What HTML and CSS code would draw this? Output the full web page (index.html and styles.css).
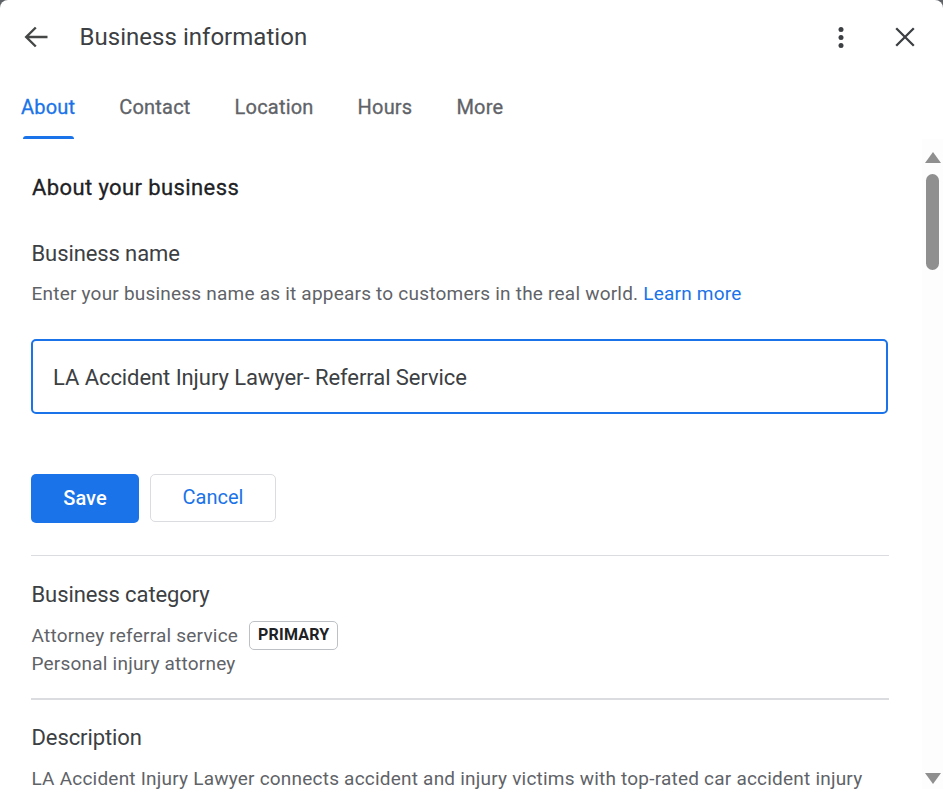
FILE: index.html
```html
<!DOCTYPE html>
<html lang="en">
<head>
<meta charset="utf-8">
<title>Business information</title>
<link rel="stylesheet" href="styles.css">
</head>
<body>
<div class="dialog">
  <header class="topbar">
    <svg class="back" viewBox="0 0 26 24" width="26" height="24"><path d="M24.5 12H3.5M12.8 2.5L3.2 12l9.6 9.5" fill="none" stroke="#444746" stroke-width="2.4"/></svg>
    <h1 class="title">Business information</h1>
    <svg class="dots" viewBox="0 0 8 24" width="8" height="24"><circle cx="4" cy="4.5" r="2.5"/><circle cx="4" cy="12.5" r="2.5"/><circle cx="4" cy="20.5" r="2.5"/></svg>
    <svg class="close" viewBox="0 0 20 20" width="20" height="20"><path d="M1.2 1.2l17.6 17.6M18.8 1.2L1.2 18.8" fill="none" stroke="#3c4043" stroke-width="2.3"/></svg>
  </header>
  <nav class="tabs">
    <a class="tab active">About</a>
    <a class="tab">Contact</a>
    <a class="tab">Location</a>
    <a class="tab">Hours</a>
    <a class="tab">More</a>
  </nav>
  <div class="body">
    <main class="content">
      <h2 class="heading">About your business</h2>
      <h3 class="label first">Business name</h3>
      <p class="help">Enter your business name as it appears to customers in the real world. <a class="link">Learn more</a></p>
      <div class="field">LA Accident Injury Lawyer- Referral Service</div>
      <div class="actions">
        <button class="btn save">Save</button>
        <button class="btn cancel">Cancel</button>
      </div>
      <hr class="rule">
      <h3 class="label">Business category</h3>
      <div class="cat-row"><span class="help-line">Attorney referral service</span><span class="chip">PRIMARY</span></div>
      <div class="help-line second">Personal injury attorney</div>
      <hr class="rule two">
      <h3 class="label">Description</h3>
      <p class="help desc">LA Accident Injury Lawyer connects accident and injury victims with top-rated car accident injury</p>
    </main>
    <aside class="scrollbar">
      <span class="arrow up"></span>
      <span class="thumb"></span>
      <span class="arrow down"></span>
    </aside>
  </div>
</div>
</body>
</html>
```

FILE: styles.css
```css
* { box-sizing: border-box; }
html, body { margin: 0; height: 100%; background: #5f6368; }
body { overflow: hidden; font-family: Roboto, "Liberation Sans", sans-serif; }
.dialog {
  width: 943px; height: 789px; background: #fff; border-radius: 8px 8px 0 0;
  display: flex; flex-direction: column; overflow: hidden;
}
.topbar { display: flex; align-items: center; height: 74px; padding: 0 28px 0 23px; flex: none; }
.back { flex: none; }
.title { margin: 0 0 0 30.5px; font-size: 24px; font-weight: 400; color: #3c4043; flex: 1; letter-spacing: .03px; }
.dots { fill: #3c4043; margin-right: 50px; }
.tabs { display: flex; gap: 44px; padding-left: 21px; height: 65px; flex: none; }
.tab { position: relative; font-size: 20px; font-weight: 400; -webkit-text-stroke: .3px currentColor; color: #5f6368; line-height: 66px; height: 65px; letter-spacing: .2px; }
.tab.active { color: #1a73e8; }
.tab.active::after {
  content: ""; position: absolute; left: 2px; right: 1px; bottom: 0; height: 3px;
  background: #1a73e8; border-radius: 3px 3px 0 0;
}
.body { flex: 1; display: flex; min-height: 0; }
.content { width: 922px; padding: 0 33px 0 31px; overflow: hidden; flex: none; }
.heading { margin: 35px 0 0; padding-left: 1px; font-size: 22px; font-weight: 400; -webkit-text-stroke: .3px currentColor; line-height: 28px; color: #202124; letter-spacing: .4px; }
.label { margin: 0; padding-left: .5px; font-size: 22px; font-weight: 400; line-height: 28px; color: #3c4043; letter-spacing: -.1px; }
.label.first { margin-top: 38px; }
.help { margin: 12px 0 0; padding-left: .5px; font-size: 19px; line-height: 28px; color: #5f6368; letter-spacing: .215px; }
.link { color: #1a73e8; }
.field {
  margin-top: 31px; height: 75px; border: 2px solid #1a73e8; border-radius: 5px; width: 857px;
  padding: 2px 20px 0; display: flex; align-items: center; font-size: 22px; letter-spacing: -.07px; color: #3c4043;
}
.actions { display: flex; gap: 11px; margin-top: 60px; align-items: flex-start; }
.btn { font-family: inherit; font-size: 20px; border-radius: 5px; font-weight: 500; padding: 0 0 2px; }
.save { width: 108px; height: 49px; background: #1a73e8; color: #fff; border: 0; }
.cancel { width: 126px; height: 48px; background: #fff; color: #1a73e8; border: 1px solid #dadce0; font-weight: 400; }
.rule { margin: 32px 0 0; border: 0; height: 1px; background: #dadce0; width: 858px; }
.rule.two { height: 2px; margin-top: 20px; }
.rule + .label { margin-top: 25px; }
.rule.two + .label { margin-top: 24px; }
.cat-row { display: flex; align-items: center; gap: 11px; margin-top: 13px; height: 28px; }
.help-line { padding-left: .5px; font-size: 19px; line-height: 28px; color: #5f6368; letter-spacing: .215px; }
.chip {
  height: 29px; margin-top: -2px; padding: 0 8px 2px; border: 1px solid #bdc1c6; border-radius: 5px; display: flex; align-items: center;
  font-size: 16px; font-weight: 700; letter-spacing: .2px; color: #202124;
}
.second { margin-top: 0; }
.desc { margin-top: 13px; white-space: nowrap; }
.scrollbar { flex: 1; display: flex; flex-direction: column; align-items: center; background: #fdfdfd; padding-top: 13px; }
.arrow { width: 0; height: 0; border-left: 8px solid transparent; border-right: 8px solid transparent; }
.arrow.up { border-bottom: 11px solid #8f8f8f; }
.arrow.down { border-top: 11px solid #8f8f8f; margin-top: auto; margin-bottom: 5px; }
.thumb { width: 13px; height: 96px; background: #8f8f8f; border-radius: 7px; margin-top: 11px; }
```
